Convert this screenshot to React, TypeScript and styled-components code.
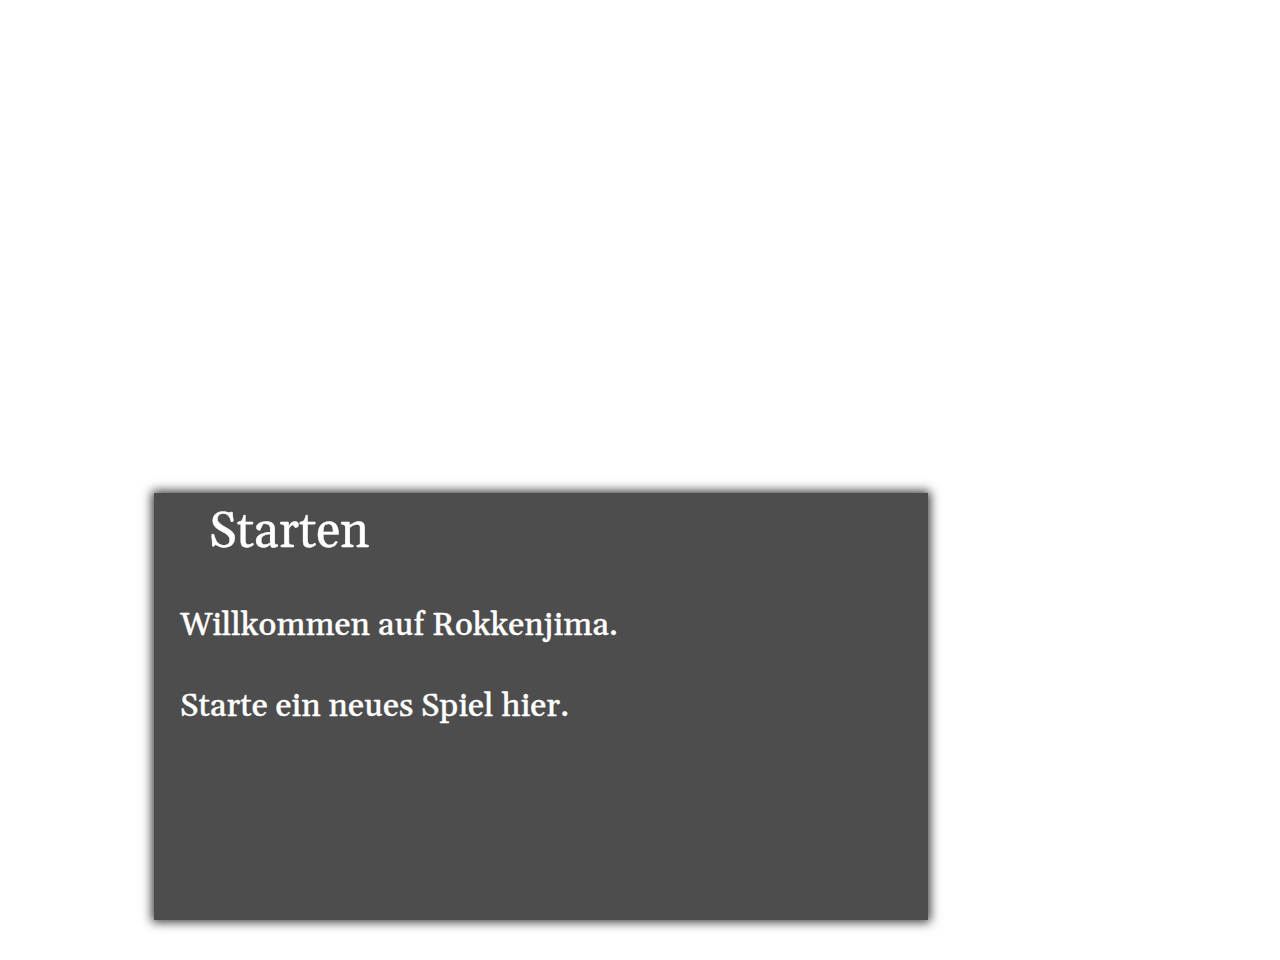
import React from "react";
import styled, { createGlobalStyle } from "styled-components";

const GlobalStyle = createGlobalStyle`
  html, body { margin: 0; padding: 0; background: #ffffff; }
  body { font-family: "Gelasio", Georgia, "Liberation Serif", serif; }
`;

const Page = styled.main`
  width: 1280px;
  height: 960px;
  box-sizing: border-box;
  padding: 493px 0 0 154px;
`;

const Panel = styled.section`
  width: 774px;
  height: 427px;
  box-sizing: border-box;
  background: #4d4d4d;
  color: #ffffff;
  box-shadow: 0 0 10px 2px rgba(0, 0, 0, 0.8);
  padding: 4px 26px 0;
  overflow: hidden;
`;

const Title = styled.h1`
  margin: 0;
  padding-left: 29px;
  font-size: 49.5px;
  font-weight: 400;
  line-height: 72px;
  -webkit-text-stroke: 0.4px #ffffff;
`;

const Text = styled.p`
  margin: 33px 0 0;
  font-size: 32px;
  font-weight: 500;
  line-height: 48px;
  -webkit-text-stroke: 0.3px #ffffff;
`;

export default function App() {
  return (
    <>
      <GlobalStyle />
      <Page>
        <Panel>
          <Title>Starten</Title>
          <Text>Willkommen auf Rokkenjima.</Text>
          <Text>Starte ein neues Spiel hier.</Text>
        </Panel>
      </Page>
    </>
  );
}
